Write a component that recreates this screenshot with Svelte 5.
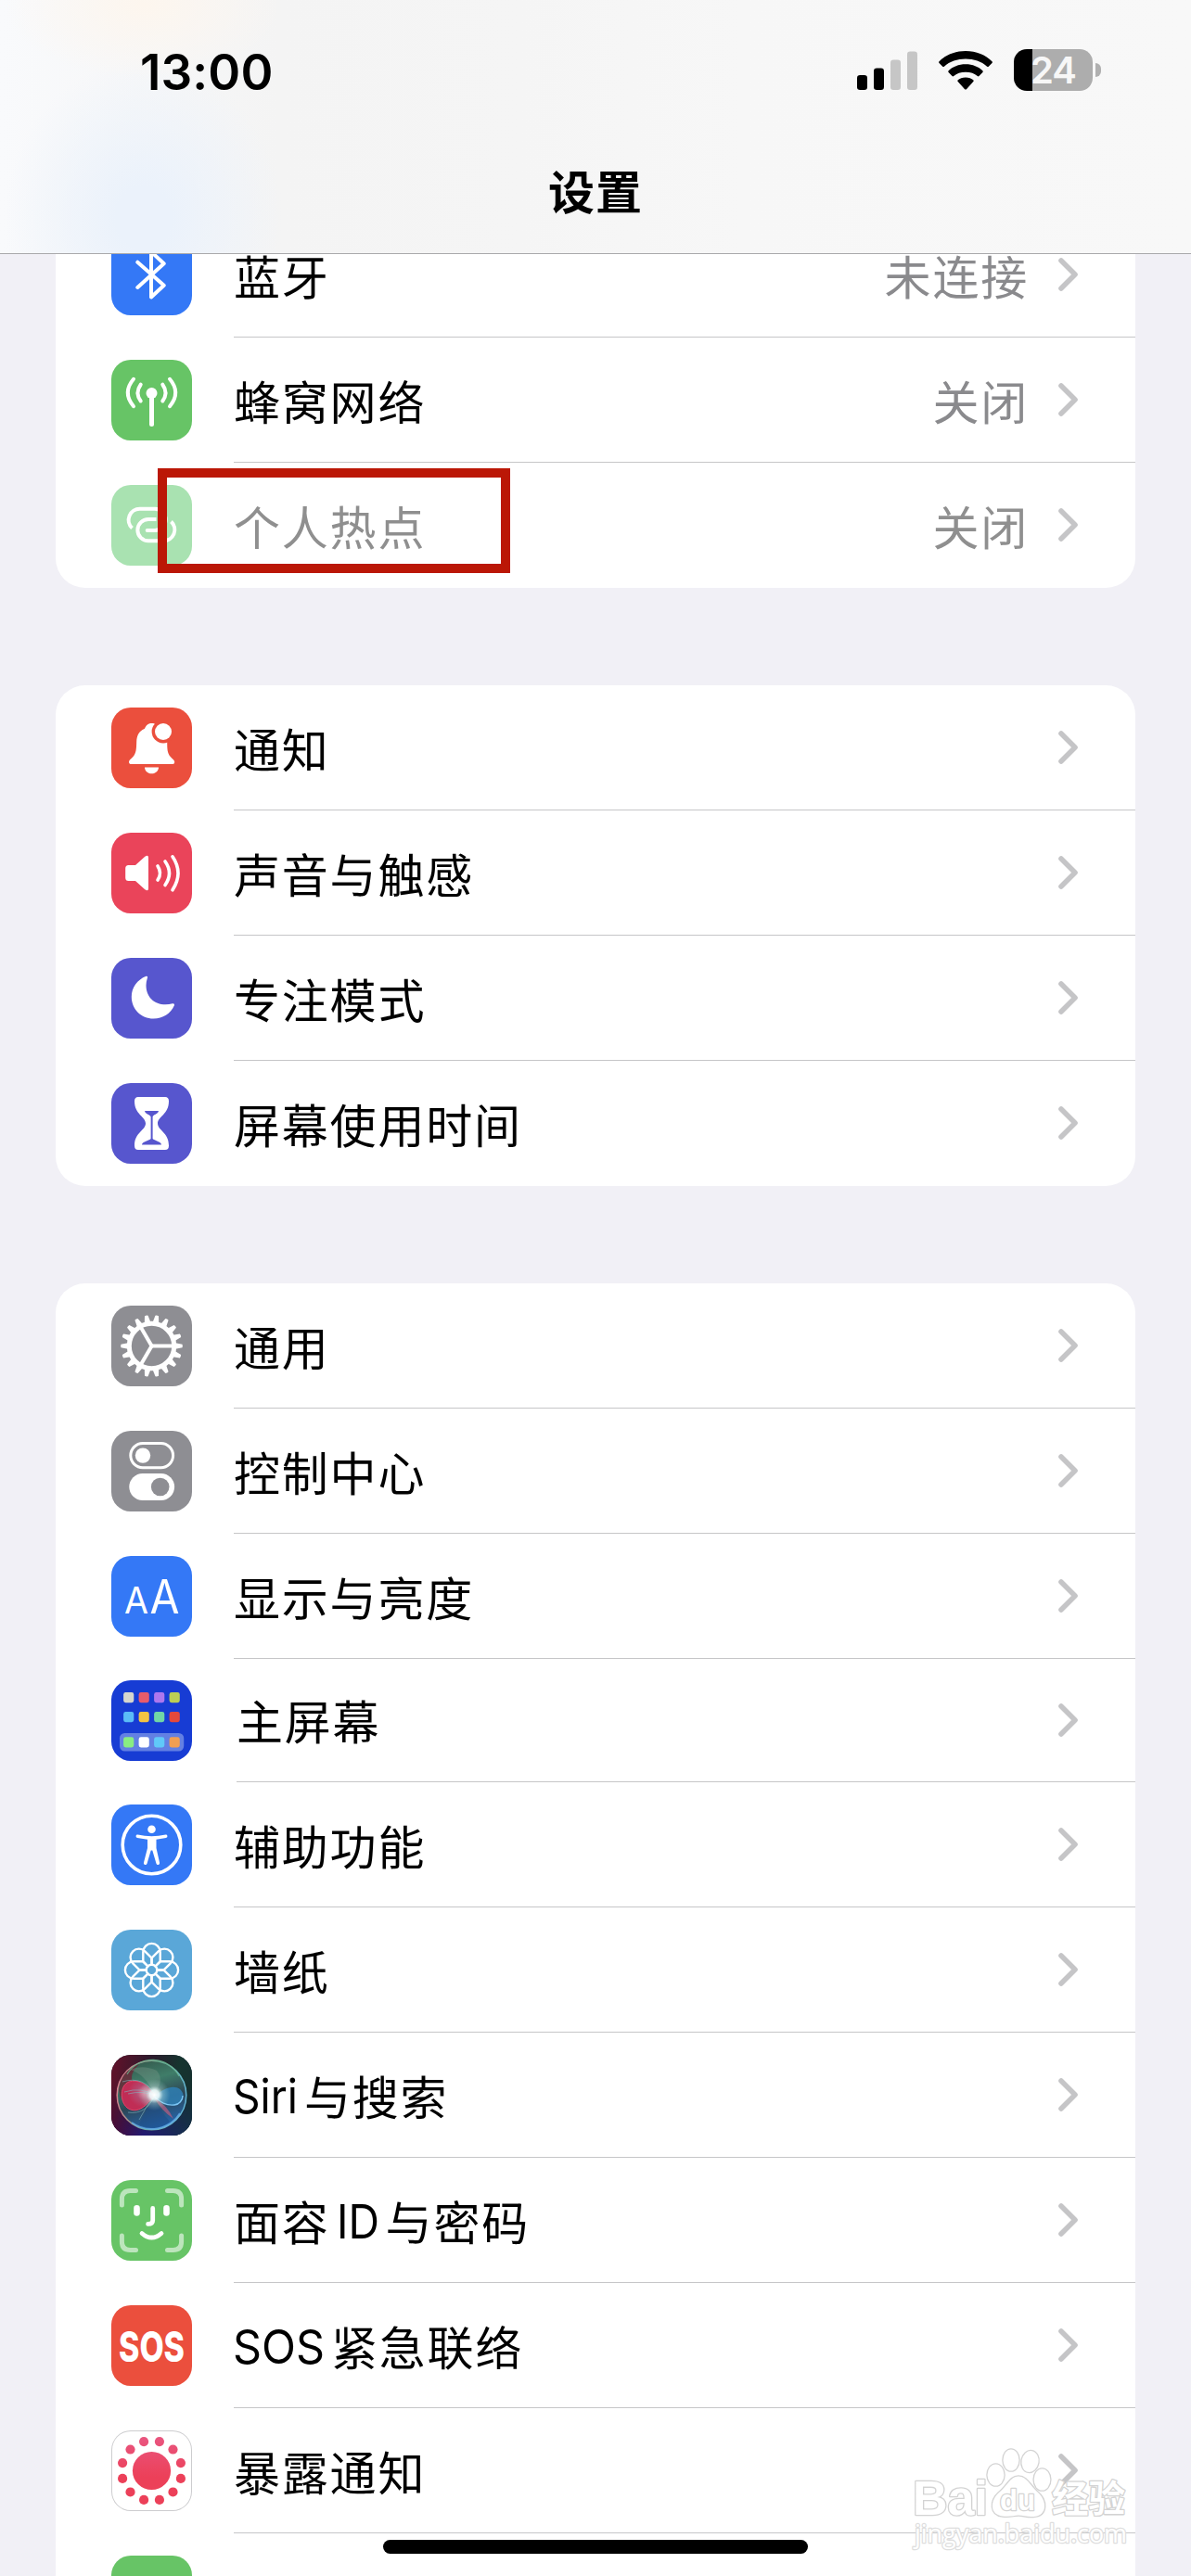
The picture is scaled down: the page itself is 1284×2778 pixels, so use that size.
<script>
  const groups = [
    [
      { icon: 'bluetooth', color: '#3478f6', label: '蓝牙', value: '未连接' },
      { icon: 'cellular', color: '#67c466', label: '蜂窝网络', value: '关闭' },
      { icon: 'hotspot', color: '#a9e2b1', label: '个人热点', value: '关闭', disabled: true }
    ],
    [
      { icon: 'bell', color: '#eb4f3d', label: '通知' },
      { icon: 'sound', color: '#ea445a', label: '声音与触感' },
      { icon: 'moon', color: '#5756ce', label: '专注模式' },
      { icon: 'hourglass', color: '#5756ce', label: '屏幕使用时间' }
    ],
    [
      { icon: 'gear', color: '#8e8e93', label: '通用' },
      { icon: 'switches', color: '#8e8e93', label: '控制中心' },
      { icon: 'display', color: '#3478f6', label: '显示与亮度' },
      { icon: 'home', color: '#173cd4', label: '主屏幕', compact: true },
      { icon: 'access', color: '#3478f6', label: '辅助功能' },
      { icon: 'flower', color: '#5aa7d8', label: '墙纸' },
      { icon: 'siri', color: '#17283a', latin: 'Siri', width: 70, label: '与搜索' },
      { icon: 'face', color: '#67c466', before: '面容', latin: 'ID', width: 46, label: '与密码' },
      { icon: 'sos', color: '#eb4f3d', latin: 'SOS', width: 99, label: '紧急联络' },
      { icon: 'exposure', color: '#fff', label: '暴露通知', outlined: true },
      { icon: 'none', color: '#67c466', label: '' }
    ]
  ];

  const teeth = Array.from({ length: 18 }, (_, i) => i * 20);
  const petals = Array.from({ length: 8 }, (_, i) => i * 45);
  const dots = Array.from({ length: 12 }, (_, i) => 15 + i * 30);
  const apps = [
    ['#d6d6ce', '#e85c6b', '#ad77ee', '#bccf54'],
    ['#5bbcf7', '#f3c343', '#71d5a6', '#e4493b'],
    ['#89ee82', '#ffffff', '#60c9f9', '#f19f53']
  ];
  const appRows = [13, 34, 61.3];
</script>

{#snippet glyph(name, color)}
  <svg class="glyph" viewBox="0 0 87 87">
    {#if name === 'bluetooth'}
      <path class="line" stroke-width="4" d="M28.3 29.7 56.7 54.7 43 67.5V18.5L56.7 31.3 28.3 57" />
    {:else if name === 'cellular'}
      <circle class="solid" cx="43.5" cy="36" r="6" />
      <path class="line" stroke-width="5" d="M43.5 38V69.5" />
      <path class="line" stroke-width="4" d="M31.7 26.7Q25.3 35.5 31.7 44.5M24 20.8Q11.5 35.5 24 50.2M55.3 26.7Q61.7 35.5 55.3 44.5M63 20.8Q75.5 35.5 63 50.2" />
    {:else if name === 'hotspot'}
      <path class="line butt" stroke-width="4" d="M22.5 46.5A12 12 0 0 1 31 25.7H47a11.6 11.6 0 0 1 0 23.3H38.5M64.5 39.5A12 12 0 0 1 56 60.3H40a11.6 11.6 0 0 1 0-23.3H48.5" />
      <circle class="solid" cx="38.7" cy="49" r="2" />
    {:else if name === 'bell'}
      <path class="solid" d="M43.7 17C39 17 37.5 19.5 36 22.8C29 26 27.5 31 27.2 37C27 44 27 49 23.5 53C20.5 56 19 57 19 58.7C19 60.4 20 61 21.5 61H65.8C67.3 61 68.2 60.4 68.2 58.7C68.2 57 66.5 56 63.7 53C60.2 49 60.3 44 60.2 37C60 31 58 26 51.3 22.8C50 19.5 48 17 43.7 17ZM36 64.4H51C51 68 48 71.2 43.5 71.2S36 68 36 64.4Z" />
      <circle fill={color} cx="56" cy="26" r="12.4" />
      <circle class="solid" cx="56" cy="26" r="9" />
    {:else if name === 'sound'}
      <path class="solid" d="M18.5 35H26L36 26Q40 23 40 27V60Q40 64 36 61L26 52H18.5Q15.2 52 15.2 48.5V38.5Q15.2 35 18.5 35Z" />
      <path class="line" stroke-width="3.6" d="M50 36Q55 43.5 50 51M58 31Q67 43.5 58 56.5M66 25.8Q78 43.5 66 61.8" />
    {:else if name === 'moon'}
      <path class="solid" d="M37.5 19.8C28 23.5 21.8 32 21.8 42C21.8 55 32 65.5 45.5 65.5C55.5 65.5 64 60 67.8 51.5C68.4 50 67.6 48.8 66 49.3C63.5 50 61 50.3 58.5 50.3C46 50.3 37.5 42 37.5 29.5C37.5 27 38 24.5 38.8 22C39.5 20.3 38.8 19.4 37.5 19.8Z" />
    {:else if name === 'hourglass'}
      <path class="solid" d="M29 15H58Q62 15 62 19.5C62 34 50 36 50 43.5S62 53 62 67.5Q62 72 58 72H29Q25 72 25 67.5C25 53 37 51 37 43.5S25 34 25 19.5Q25 15 29 15Z" />
      <path fill={color} d="M36 30H51C50.5 33.5 44.6 34 44.6 36.5V60C46 62 54 63 54 66.5H33C33 63 41.4 62 42.6 60V36.5C42.4 34 36.5 33.5 36 30Z" />
    {:else if name === 'gear'}
      <circle class="line" cx="43.5" cy="43.5" r="24.2" stroke-width="5" />
      {#each teeth as angle}
        <path class="solid" transform="rotate({angle} 43.5 43.5)" d="M69 40.2 76.5 41.7Q77.2 43.5 76.5 45.3L69 46.8Z" />
      {/each}
      {#each [0, 120, 240] as angle}
        <path class="line butt" stroke-width="4" transform="rotate({angle} 43.5 43.5)" d="M42.5 43.5H67" />
      {/each}
    {:else if name === 'switches'}
      <rect class="line" x="20.8" y="13.5" width="45.8" height="26.2" rx="13.1" stroke-width="3" />
      <circle class="solid" cx="34" cy="26.6" r="8.2" />
      <rect class="solid" x="19.3" y="46" width="48.8" height="29" rx="14.5" />
      <circle fill={color} cx="52.7" cy="60.5" r="9.8" />
    {:else if name === 'display'}
      <text class="solid" x="14" y="61.8" font-size="39" font-weight="400" textLength="26" lengthAdjust="spacingAndGlyphs">A</text>
      <text class="solid" x="41.500" y="61.8" font-size="50" font-weight="400" textLength="32" lengthAdjust="spacingAndGlyphs">A</text>
    {:else if name === 'home'}
      <rect x="9" y="57" width="69.2" height="19.6" rx="5.5" fill="#6380e3" />
      {#each apps as row, r}
        {#each row as fill, c}
          <rect x={13.1 + c * 16.5} y={appRows[r]} width="11.2" height="11.2" rx="2.4" {fill} />
        {/each}
      {/each}
    {:else if name === 'access'}
      <circle class="line" cx="43.5" cy="43.5" r="31.3" stroke-width="3.6" />
      <circle class="solid" cx="43.5" cy="26.7" r="4.3" />
      <path class="solid" d="M28.5 32.6Q43.5 36 58.5 32.6A1.7 1.7 0 0 1 59 36L48.5 37.8V47L52 62.5A1.8 1.8 0 0 1 48.5 63.8L44.3 49.5H42.7L38.5 63.8A1.8 1.8 0 0 1 35 62.5L39 47V37.8L28 36A1.7 1.7 0 0 1 28.5 32.6Z" />
    {:else if name === 'flower'}
      {#each petals as angle}
        <path class="line" stroke-width="2.4" transform="translate(43.5 43.5) rotate({angle})" d="M-4-4-9.2-9.400V-19.4A9.2 9.2 0 0 1 9.2-19.4V-9.400L4-4" />
      {/each}
      <circle class="line" cx="43.5" cy="43.5" r="5.8" stroke-width="2.4" />
    {:else if name === 'siri'}
      <defs>
        <linearGradient id="siriBase" x1="0" y1=".2" x2="1" y2=".4">
          <stop offset="0" stop-color="#61122a" />
          <stop offset=".45" stop-color="#2b1a2c" />
          <stop offset=".8" stop-color="#16342f" />
          <stop offset="1" stop-color="#16302f" />
        </linearGradient>
        <linearGradient id="siriFloor" x1="0" y1="0" x2="1" y2="0">
          <stop offset="0" stop-color="#4a0a36" />
          <stop offset=".4" stop-color="#231a73" />
          <stop offset="1" stop-color="#15304c" />
        </linearGradient>
        <linearGradient id="siriFade" x1="0" y1=".4" x2="0" y2="1">
          <stop offset="0" stop-color="#000" />
          <stop offset="1" stop-color="#fff" />
        </linearGradient>
        <mask id="siriMask"><rect width="87" height="87" fill="url(#siriFade)" /></mask>
        <linearGradient id="siriOrb" x1=".3" y1="0" x2=".6" y2="1">
          <stop offset="0" stop-color="#34584c" />
          <stop offset=".3" stop-color="#3f7d69" />
          <stop offset=".6" stop-color="#2c4656" />
          <stop offset="1" stop-color="#2468b4" />
        </linearGradient>
        <linearGradient id="siriRim" x1="0" y1=".4" x2="1" y2=".6">
          <stop offset="0" stop-color="#d9808f" />
          <stop offset=".5" stop-color="#67a98a" />
          <stop offset="1" stop-color="#63b6d8" />
        </linearGradient>
        <radialGradient id="siriGlow">
          <stop offset="0" stop-color="#fff" />
          <stop offset=".3" stop-color="#f2ffff" stop-opacity=".9" />
          <stop offset=".55" stop-color="#c9efe8" stop-opacity=".35" />
          <stop offset="1" stop-color="#a8e8dc" stop-opacity="0" />
        </radialGradient>
        <radialGradient id="siriPink" cx=".7" cy=".4">
          <stop offset="0" stop-color="#e0809c" />
          <stop offset=".5" stop-color="#b5496f" />
          <stop offset="1" stop-color="#c02d55" />
        </radialGradient>
      </defs>
      <rect width="87" height="87" fill="url(#siriBase)" />
      <rect width="87" height="87" fill="url(#siriFloor)" mask="url(#siriMask)" />
      <circle cx="43.5" cy="43.5" r="37.3" fill="url(#siriOrb)" stroke="url(#siriRim)" stroke-width="1.5" />
      <path d="M8 38Q10 17 30 10Q18 22 24 30Q12 33 10 48Z" fill="#6b2636" opacity=".8" />
      <path d="M20 16Q36 20 46 42Q58 28 49 17Q34 10 20 16Z" fill="#7f9b8d" opacity=".35" />
      <path d="M46 44C40 31 28 26 19 29C9 33 9 50 17 57C28 65 39 54 46 44Z" fill="url(#siriPink)" stroke="#e8436a" stroke-width="1" />
      <path d="M46 45C56 36 67 32 74 37C81 43 77 53 68 54C59 55 53 49 46 45Z" fill="#2f7fb4" opacity=".85" />
      <path d="M46 45C53 51 59 55 68 54C73 53.500 77 49 77 44" fill="none" stroke="#7cc6f5" stroke-width="1.4" />
      <path d="M46 46Q36 61 30 75Q48 84 63 72Q53 61 46 46Z" fill="#1d4c88" opacity=".55" />
      <path d="M46 46Q60 54 67 69Q54 60 46 46Z" fill="#ba5d80" opacity=".7" />
      <path d="M12 29Q35 22 47 43Q38 65 18 62M14 40Q33 34 47 44Q34 38 18 42M46 45Q36 58 30 70" fill="none" stroke="#83b2c0" stroke-width="1" opacity=".6" />
      <path d="M17 21A32 32 0 0 1 73 23" fill="none" stroke="#6bb58e" stroke-width="1.2" opacity=".8" />
      <path d="M22 73A36 36 0 0 0 74 63" fill="none" stroke="#67aee8" stroke-width="2" opacity=".8" />
      <circle cx="46.500" cy="43" r="17" fill="url(#siriGlow)" />
    {:else if name === 'face'}
      <path class="line" stroke-width="5" opacity=".56" d="M11.4 27V20.4Q11.4 11.4 20.4 11.4H26.5M60.5 11.4H66.6Q75.6 11.4 75.6 20.4V27M75.6 60V66.6Q75.6 75.6 66.6 75.6H60.5M26.5 75.6H20.4Q11.4 75.6 11.4 66.6V60" />
      <path class="line" stroke-width="6.6" d="M27.5 30.4V35.5M59.5 30.4V35.5" />
      <path class="line" stroke-width="4.8" d="M44.7 30.4V43.5Q44.7 47.4 39.6 47.4M33 57.5Q43.5 66.7 54 57.5" />
    {:else if name === 'sos'}
      <text class="solid" x="8" y="60.800" font-size="45" font-weight="800" textLength="71" lengthAdjust="spacingAndGlyphs">SOS</text>
    {:else if name === 'exposure'}
      <defs>
        <linearGradient id="exposure" gradientUnits="userSpaceOnUse" x1="0" y1="8" x2="0" y2="50">
          <stop offset="0" stop-color="#e9557f" />
          <stop offset="1" stop-color="#ec4059" />
        </linearGradient>
      </defs>
      <g fill="url(#exposure)">
        <circle cx="43.5" cy="43.5" r="20.6" />
        {#each dots as angle}
          <circle cx={43.5 + 32.5 * Math.sin((angle * Math.PI) / 180)} cy={43.5 - 32.5 * Math.cos((angle * Math.PI) / 180)} r="5.1" />
        {/each}
      </g>
    {/if}
  </svg>
{/snippet}

<div class="screen">
  <header>
    <div class="status">
      <span class="time">13:00</span>
      <div class="indicators">
        <svg width="65" height="42" viewBox="0 0 65 42">
          <rect y="26" width="11" height="16" rx="3.2" />
          <rect x="18" y="18.5" width="11" height="23.5" rx="3.2" />
          <rect x="36" y="9.5" width="11" height="32.5" rx="3.2" fill="#c6c6c6" />
          <rect x="54" y=".5" width="11" height="41.5" rx="3.2" fill="#c6c6c6" />
        </svg>
        <svg width="58" height="42" viewBox="0 0 58 42">
          <path d="M29 0C40.500 0 50.500 4.300 57.500 11.200Q58.300 12 57.500 12.900L53.800 16.700Q53 17.500 52.100 16.700C46 11.300 38 8.600 29 8.600S12 11.300 5.900 16.700Q5 17.500 4.200 16.700L.5 12.900Q-.3 12 .5 11.200C7.500 4.300 17.500 0 29 0Z" />
          <path d="M29 14.300C36.500 14.300 43 17 47.400 21.300Q48.200 22.200 47.400 23L43.500 27Q42.700 27.800 41.800 27C38.500 24.200 34.500 22.700 29 22.700S19.500 24.200 16.200 27Q15.300 27.800 14.500 27L10.600 23Q9.800 22.200 10.600 21.300C15 17 21.500 14.300 29 14.300Z" />
          <path d="M29 28.500C32.500 28.500 35.300 29.600 37.300 31.300Q38.200 32.200 37.300 33L29.900 41.200Q29 42 28.100 41.200L20.700 33Q19.800 32.200 20.700 31.300C22.700 29.600 25.500 28.500 29 28.500Z" />
        </svg>
        <div class="battery"><span>24</span></div>
      </div>
    </div>
    <h1>设置</h1>
  </header>

  <main>
    {#each groups as rows}
      <section>
        {#each rows as row}
          <div class="row" class:disabled={row.disabled} class:compact={row.compact}>
            <div class="icon" class:outlined={row.outlined} style="background: {row.color}">
              {@render glyph(row.icon, row.color)}
            </div>
            <div class="body">
              <span class="label">
                {#if row.before}<span class="before">{row.before}</span>{/if}{#if row.latin}<svg class="latin" width={row.width} height="52"><text x="-1" y="46" textLength={row.width} lengthAdjust="spacingAndGlyphs">{row.latin}</text></svg>{/if}{row.label}
              </span>
              {#if row.value}<span class="value">{row.value}</span>{/if}
              <svg class="chevron" width="22" height="38" viewBox="0 0 22 38">
                <path d="M3 4 18 19 3 34" />
              </svg>
            </div>
          </div>
        {/each}
      </section>
    {/each}
  </main>

  <div class="marker"></div>

  <svg class="watermark" width="250" height="130" viewBox="0 0 250 130">
    <g class="paw">
      <ellipse cx="93.500" cy="29" rx="9" ry="11.500" />
      <ellipse cx="110" cy="13" rx="8.500" ry="11.500" />
      <ellipse cx="130.500" cy="14.500" rx="9" ry="11.500" transform="rotate(10 130.500 14.500)" />
      <ellipse cx="143.500" cy="34" rx="8.800" ry="11.500" />
      <path d="M118 30.500C127 30.500 131 41 138 47C149 56 150 73 134 74C127 74.500 123 72.500 118 72.500S109 74.500 101 73.500C87 72 87 57 97 48C106 41 109 30.500 118 30.500Z" />
    </g>
    <text class="brand" x="4" y="72" font-size="51" textLength="81" lengthAdjust="spacingAndGlyphs">Bai</text>
    <text class="du" x="98" y="66.500" font-size="32" textLength="38" lengthAdjust="spacingAndGlyphs">du</text>
    <text class="brand cjk" x="154" y="69" font-size="40" textLength="79" lengthAdjust="spacingAndGlyphs">经验</text>
    <text class="url" x="6" y="102" font-size="27" textLength="229" lengthAdjust="spacingAndGlyphs">jingyan.baidu.com</text>
  </svg>

  <div class="home-bar"></div>
</div>

<style>
  :global(body) {
    margin: 0;
  }

  .screen {
    position: relative;
    display: flex;
    flex-direction: column;
    width: 1284px;
    height: 2778px;
    overflow: hidden;
    background: #f1f0f6;
    color: #000;
    font-family: Inter, 'Noto Sans CJK SC', sans-serif;
  }

  header {
    box-sizing: border-box;
    flex: none;
    height: 274px;
    border-bottom: 1px solid #a9a9ab;
    background:
      radial-gradient(ellipse 150px 80px at 155px 5px, #fdf6ee, transparent),
      radial-gradient(ellipse 150px 170px at 155px 235px, #ebf2fb 20%, transparent),
      linear-gradient(90deg, #f9fafc 0, #f4f4f4 300px, #f5f5f5 560px, #f7f7f7 800px, #f8f8f8 100%);
  }

  .status {
    display: flex;
    justify-content: space-between;
    align-items: center;
    height: 151px;
    padding: 0 97px 0 151px;
  }

  .time {
    font-size: 53px;
    font-weight: 600;
    line-height: 60px;
    letter-spacing: 0.1px;
    margin-top: 4px;
  }

  .indicators {
    display: flex;
    align-items: center;
    gap: 23px;
  }

  .battery {
    position: relative;
    width: 85px;
    height: 45px;
    margin-right: 9px;
    border-radius: 14px;
    background: linear-gradient(90deg, #000 20px, #adadad 20px);
    color: #f7f7f7;
    font-size: 40px;
    font-weight: 600;
    line-height: 46px;
    text-align: center;
  }

  .battery span {
    letter-spacing: -1px;
  }

  .battery::after {
    content: '';
    position: absolute;
    left: 88px;
    top: 15px;
    width: 6px;
    height: 15px;
    border-radius: 0 6px 6px 0;
    background: #b0b0b0;
  }

  h1 {
    margin: 17px 0 0;
    font-size: 50px;
    font-weight: 600;
    line-height: 72px;
    letter-spacing: 1px;
    text-align: center;
    font-family: 'Noto Sans CJK SC', sans-serif;
  }

  main {
    display: flex;
    flex-direction: column;
    flex: 1;
    gap: 105px;
    min-height: 0;
    overflow: hidden;
    padding: 0 60px;
  }

  section {
    flex: none;
    border-radius: 32px;
    overflow: hidden;
    background: #fff;
  }

  /* list is scrolled partly under the title bar */
  section:first-child {
    margin-top: -45px;
  }

  .row {
    display: flex;
    align-items: center;
    height: 135px;
    padding-left: 60px;
  }

  .row.compact {
    height: 133px;
  }

  .icon {
    flex: none;
    width: 87px;
    height: 87px;
    border-radius: 21px;
    overflow: hidden;
  }

  .icon.outlined {
    box-shadow: inset 0 0 0 1px #cdcdcf;
  }

  .glyph {
    display: block;
    width: 87px;
    height: 87px;
  }

  .line {
    fill: none;
    stroke: #fff;
    stroke-linecap: round;
    stroke-linejoin: round;
  }

  .line.butt {
    stroke-linecap: butt;
  }

  .solid {
    fill: #fff;
  }

  .body {
    box-sizing: border-box;
    display: flex;
    align-items: center;
    flex: 1;
    height: 100%;
    margin-left: 45px;
    padding-right: 61px;
    border-bottom: 1px solid #c6c6c8;
  }

  .compact .body {
    margin-left: 48px;
  }

  .compact .label {
    margin-top: -3px;
  }

  .row:last-child .body {
    border-bottom-color: transparent;
  }

  .label,
  .value {
    font-family: 'Noto Sans CJK SC', sans-serif;
    font-size: 50px;
    line-height: 76px;
    letter-spacing: 1.8px;
    white-space: nowrap;
  }

  .label {
    display: flex;
    align-items: center;
    flex: 1;
  }

  .latin {
    margin-right: 6px;
    overflow: visible;
    font-family: Inter, sans-serif;
    font-size: 51px;
    letter-spacing: 0;
  }

  .before {
    margin-right: 8px;
  }

  .value {
    margin-right: 32px;
    color: #8a8a8d;
  }

  .disabled .label,
  .disabled .value {
    color: #8f8f8f;
  }

  .chevron path {
    fill: none;
    stroke: #c5c5c7;
    stroke-width: 5.6;
    stroke-linecap: round;
    stroke-linejoin: round;
  }

  .marker {
    position: absolute;
    left: 170px;
    top: 505px;
    box-sizing: border-box;
    width: 380px;
    height: 113px;
    border: 10px solid #bb1706;
  }

  .watermark {
    position: absolute;
    left: 980px;
    top: 2640px;
  }

  .watermark text,
  .paw {
    fill: #fff;
    stroke: #d3d3d3;
    stroke-width: 2.6;
    stroke-linejoin: round;
    paint-order: stroke;
  }

  .brand,
  .du {
    font-family: 'Liberation Sans', sans-serif;
    font-weight: 700;
  }

  .watermark .cjk {
    font-family: 'Noto Sans CJK SC', sans-serif;
  }

  .watermark .url {
    font-family: 'Open Sans', sans-serif;
    stroke: #dedede;
  }

  .home-bar {
    position: absolute;
    left: 413px;
    top: 2739px;
    width: 458px;
    height: 15px;
    border-radius: 8px;
    background: #000;
  }
</style>
